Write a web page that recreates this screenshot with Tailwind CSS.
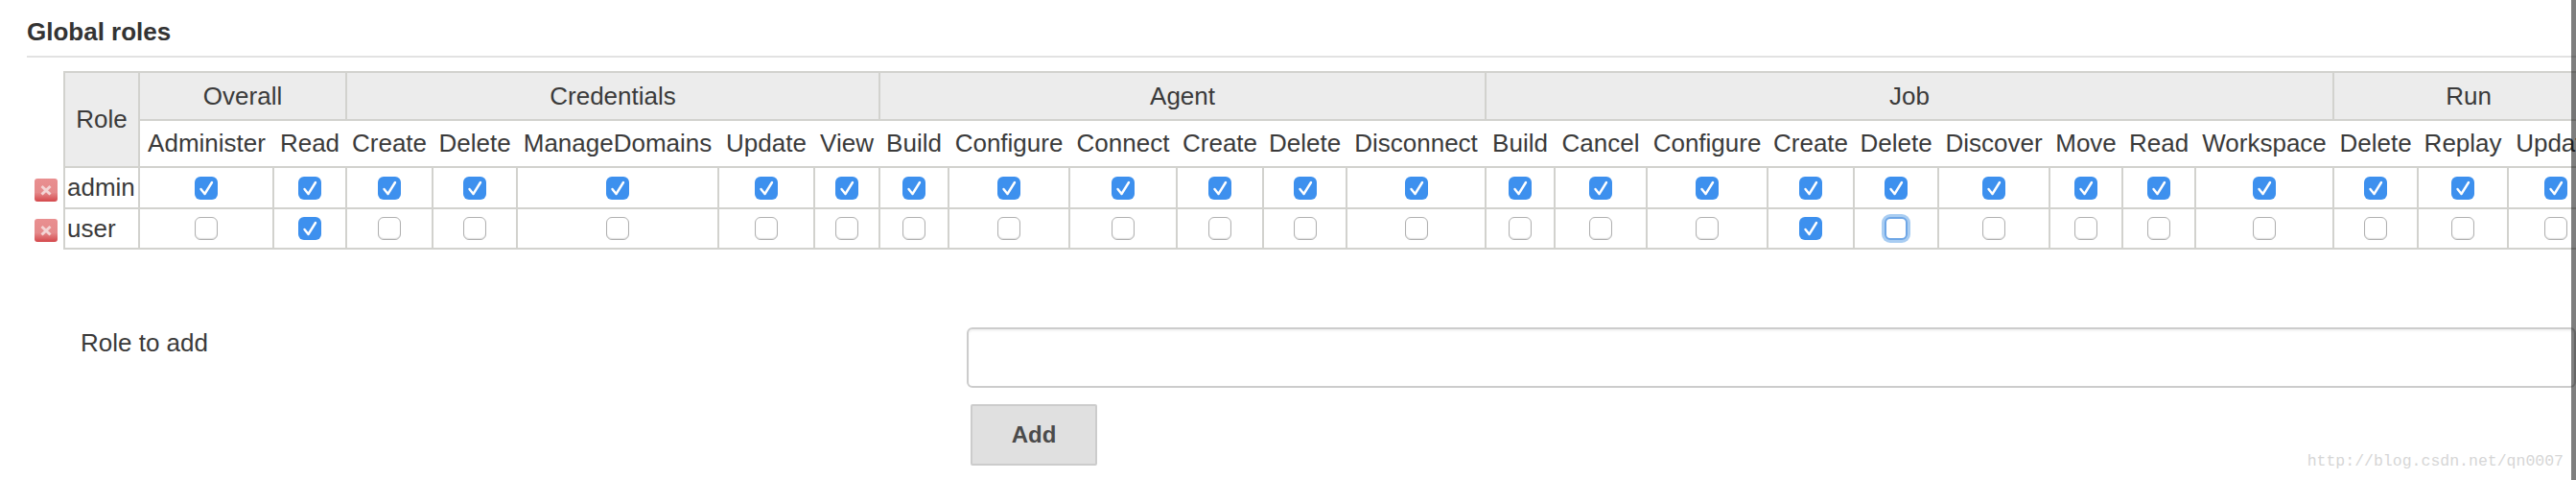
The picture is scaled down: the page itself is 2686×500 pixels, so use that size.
<!DOCTYPE html>
<html lang="en">
<head>
<meta charset="utf-8">
<title>Global roles</title>
<script src="https://cdn.jsdelivr.net/npm/@tailwindcss/browser@4"></script>
</head>
<body class="bg-white">
<div class="relative w-[2686px] h-[500px] overflow-hidden bg-white text-[26px] text-[#3a3a3a] font-['Liberation_Sans',Arial,sans-serif]">
    <div class="pl-[28px] pt-[18px]">
        <h2 class="h-[30px] leading-[30px] font-bold text-[#333]">Global roles</h2>
        <div class="mt-[10px] h-[2px] bg-[#e2e2e2]"></div>

        <table id="roles" class="mt-[14px] w-[2688px] table-fixed border-collapse">
            <colgroup id="cols"></colgroup>
            <thead>
                <tr id="groupRow" class="h-[50px]"></tr>
                <tr id="permRow" class="h-[49px]"></tr>
            </thead>
            <tbody id="rows"></tbody>
        </table>

        <div class="flex mt-[81px]">
            <label for="roleName" class="w-[980px] shrink-0 pl-[56px] leading-[32px]">Role to add</label>
            <div class="flex-1">
                <input id="roleName" type="text" class="block w-full h-[63px] border-2 border-[#ccc] rounded-[6px] bg-white shadow-[inset_0_2px_2px_rgba(0,0,0,0.05)]">
                <button type="button" class="block mt-[17px] ml-[4px] w-[132px] h-[64px] bg-[#e0e0e0] border-2 border-[#ccc] rounded-[2px] text-[24px] font-bold text-[#4b4b4b]">Add</button>
            </div>
        </div>
    </div>

    <div class="absolute right-[13px] bottom-[9px] font-['Liberation_Mono',monospace] text-[16.5px] leading-[20px] text-[#d6d6d6]">http://blog.csdn.net/qn0007</div>
    <div class="absolute top-0 right-0 bottom-0 w-[5px] bg-black/50"></div>
</div>

<script>
const groups = [
    ['Overall', [['Administer', 140], ['Read', 76]]],
    ['Credentials', [['Create', 90], ['Delete', 88], ['ManageDomains', 210], ['Update', 100], ['View', 68]]],
    ['Agent', [['Build', 72], ['Configure', 126], ['Connect', 112], ['Create', 90], ['Delete', 87], ['Disconnect', 145]]],
    ['Job', [['Build', 72], ['Cancel', 96], ['Configure', 126], ['Create', 90], ['Delete', 88], ['Discover', 116], ['Move', 76], ['Read', 76], ['Workspace', 144]]],
    ['Run', [['Delete', 88], ['Replay', 94], ['Update', 100]]]
];
const cellBorder = 'border-2 border-[#d2d2ce]';
const checkMark = '<svg viewBox="0 0 24 24" class="block w-[24px] h-[24px]" fill="none" stroke="#fff" stroke-width="2.4" stroke-linecap="round" stroke-linejoin="round"><path d="M6.5 13 L10.5 18 L18 6"/></svg>';
const perms = groups.flatMap(g => g[1]);

function checkbox(state) {
    if (state === 'on') {
        return '<div class="mx-auto w-[24px] h-[24px] rounded-[6px] bg-[#3d90ee]">' + checkMark + '</div>';
    }
    if (state === 'focus') {
        return '<div class="mx-auto w-[24px] h-[24px] rounded-[6px] bg-white border-2 border-[#6ea6e6] shadow-[0_0_0_3px_#a9cdf2]"></div>';
    }
    return '<div class="mx-auto w-[24px] h-[24px] rounded-[6px] bg-white border-[1.5px] border-[#b0b0b0] shadow-[inset_0_-1px_1px_rgba(0,0,0,0.12)]"></div>';
}

function removeIcon() {
    return '<svg viewBox="0 0 24 24" class="block w-[24px] h-[24px]"><defs><linearGradient id="red" x1="0" y1="0" x2="0" y2="1"><stop offset="0" stop-color="#e98f90"/><stop offset="0.6" stop-color="#e58a8b"/><stop offset="1" stop-color="#d4484c"/></linearGradient></defs><rect width="24" height="24" rx="3" fill="url(#red)"/><path d="M7.5 8 L16.5 16.5 M16.5 8 L7.5 16.5" stroke="#f3d4d4" stroke-width="3"/></svg>';
}

document.getElementById('cols').innerHTML =
    '<col class="w-[39px]"><col class="w-[78px]">' +
    perms.map(p => '<col style="width:' + p[1] + 'px">').join('');

document.getElementById('groupRow').innerHTML =
    '<th rowspan="2"></th><th rowspan="2" class="' + cellBorder + ' bg-[#ececec] font-normal">Role</th>' +
    groups.map(g => '<th colspan="' + g[1].length + '" class="' + cellBorder + ' bg-[#ececec] font-normal">' + g[0] + '</th>').join('');

document.getElementById('permRow').innerHTML =
    perms.map(p => '<th class="border-y-2 border-[#d2d2ce] font-normal whitespace-nowrap overflow-hidden">' + p[0] + '</th>').join('');

// admin has everything, user only Read and Job/Create, Job/Delete has focus
let html = '';
['admin', 'user'].forEach((name, r) => {
    html += '<tr class="' + (r ? 'h-[42px]' : 'h-[43px]') + '"><td class="pl-[8px] pt-[4px]">' + removeIcon() + '</td>';
    html += '<td class="' + cellBorder + ' pl-[2px]">' + name + '</td>';
    perms.forEach((p, i) => {
        let state = 'on';
        if (r === 1) {
            state = 'off';
            if (i === 1 || i === 16) state = 'on';
            if (i === 17) state = 'focus';
        }
        html += '<td class="' + cellBorder + '">' + checkbox(state) + '</td>';
    });
    html += '</tr>';
});
document.getElementById('rows').innerHTML = html;
</script>
</body>
</html>
